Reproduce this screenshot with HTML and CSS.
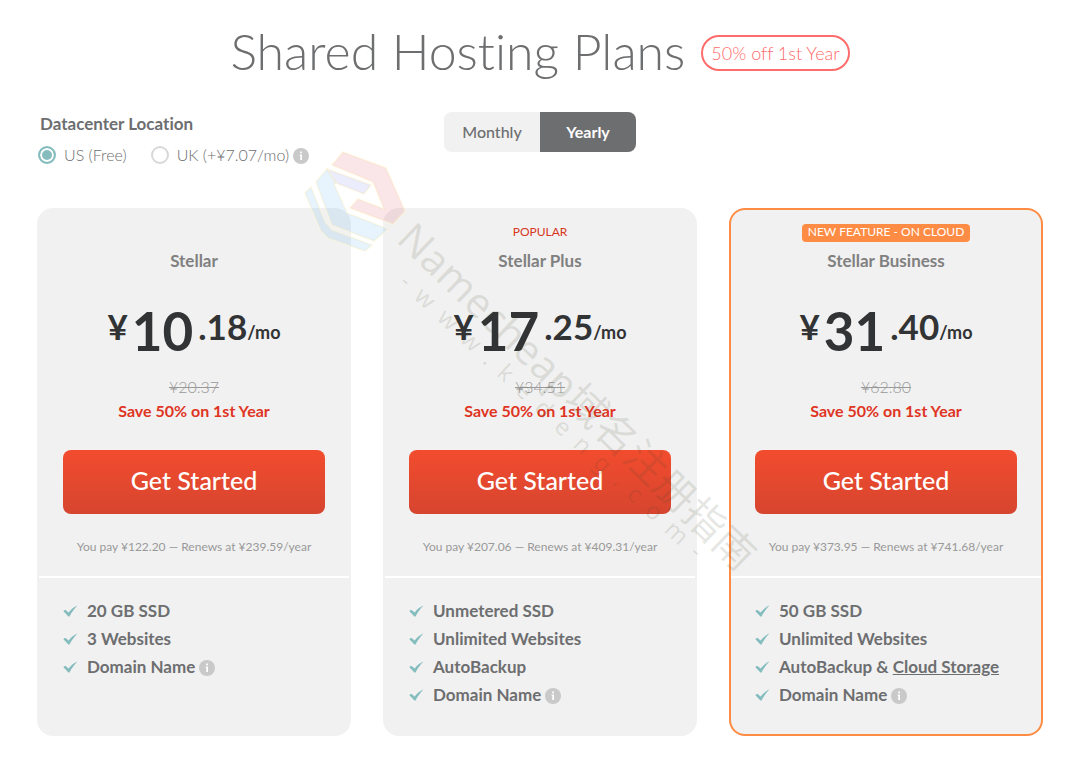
FILE: index.html
```html
<!DOCTYPE html>
<html lang="en">
<head>
<meta charset="utf-8">
<title>Shared Hosting Plans</title>
<link rel="stylesheet" href="styles.css">
</head>
<body>
<svg class="symbols" aria-hidden="true">
  <symbol id="tick" viewBox="0 0 15 12"><path d="M.4 6.200C1 5 2 4.700 3.200 5.400L5.600 7.500C8 4.500 11 1.900 14.600.300 11.500 3.600 8.800 7.200 6.500 11.500H5.400z" fill="#85bdbf"/></symbol>
  <symbol id="info" viewBox="0 0 16 16"><circle cx="8" cy="8" r="8" fill="#c9c9c9"/><path d="M6.500 6.500H9V12H7.300V7.500H6.500zM7.200 3.600H9V5.200H7.200z" fill="#fff"/></symbol>
</svg>
<main class="page">
  <header class="title-row">
    <h1 class="title">Shared Hosting Plans</h1>
    <span class="offer">50% off 1st Year</span>
  </header>

  <div class="options">
    <fieldset class="location">
      <legend class="location-title">Datacenter Location</legend>
      <div class="choices">
        <label class="choice"><input class="radio" type="radio" name="dc" checked>US (Free)</label>
        <label class="choice"><input class="radio" type="radio" name="dc">UK (+¥7.07/mo)</label>
        <svg class="info"><use href="#info"/></svg>
      </div>
    </fieldset>
    <div class="toggle">
      <button class="toggle-button" type="button">Monthly</button>
      <button class="toggle-button toggle-active" type="button">Yearly</button>
    </div>
  </div>

  <div class="plans">
    <section class="plan">
      <div class="summary">
        <div class="flag"></div>
        <h2 class="name">Stellar</h2>
        <div class="price"><span class="part">¥</span><span class="whole">10</span><span class="part">.18</span><span class="unit">/mo</span></div>
        <s class="old">¥20.37</s>
        <p class="save">Save 50% on 1st Year</p>
        <button class="start" type="button">Get Started</button>
        <p class="terms">You pay ¥122.20 — Renews at ¥239.59/year</p>
      </div>
      <ul class="features">
        <li class="feature"><svg class="tick"><use href="#tick"/></svg><span>20 GB SSD</span></li>
        <li class="feature"><svg class="tick"><use href="#tick"/></svg><span>3 Websites</span></li>
        <li class="feature"><svg class="tick"><use href="#tick"/></svg><span>Domain Name</span><svg class="info"><use href="#info"/></svg></li>
      </ul>
    </section>

    <section class="plan">
      <div class="summary">
        <div class="flag"><span class="popular">POPULAR</span></div>
        <h2 class="name">Stellar Plus</h2>
        <div class="price"><span class="part">¥</span><span class="whole">17</span><span class="part">.25</span><span class="unit">/mo</span></div>
        <s class="old">¥34.51</s>
        <p class="save">Save 50% on 1st Year</p>
        <button class="start" type="button">Get Started</button>
        <p class="terms">You pay ¥207.06 — Renews at ¥409.31/year</p>
      </div>
      <ul class="features">
        <li class="feature"><svg class="tick"><use href="#tick"/></svg><span>Unmetered SSD</span></li>
        <li class="feature"><svg class="tick"><use href="#tick"/></svg><span>Unlimited Websites</span></li>
        <li class="feature"><svg class="tick"><use href="#tick"/></svg><span>AutoBackup</span></li>
        <li class="feature"><svg class="tick"><use href="#tick"/></svg><span>Domain Name</span><svg class="info"><use href="#info"/></svg></li>
      </ul>
    </section>

    <section class="plan plan-cloud">
      <div class="summary">
        <div class="flag"><span class="badge">NEW FEATURE - ON CLOUD</span></div>
        <h2 class="name">Stellar Business</h2>
        <div class="price"><span class="part">¥</span><span class="whole">31</span><span class="part">.40</span><span class="unit">/mo</span></div>
        <s class="old">¥62.80</s>
        <p class="save">Save 50% on 1st Year</p>
        <button class="start" type="button">Get Started</button>
        <p class="terms">You pay ¥373.95 — Renews at ¥741.68/year</p>
      </div>
      <ul class="features">
        <li class="feature"><svg class="tick"><use href="#tick"/></svg><span>50 GB SSD</span></li>
        <li class="feature"><svg class="tick"><use href="#tick"/></svg><span>Unlimited Websites</span></li>
        <li class="feature"><svg class="tick"><use href="#tick"/></svg><span>AutoBackup &amp; <a class="link" href="#">Cloud Storage</a></span></li>
        <li class="feature"><svg class="tick"><use href="#tick"/></svg><span>Domain Name</span><svg class="info"><use href="#info"/></svg></li>
      </ul>
    </section>
  </div>

  <svg class="watermark" viewBox="0 0 520 480" aria-hidden="true">
    <g stroke="#fff8d8" stroke-width="2" stroke-opacity=".5" paint-order="stroke">
      <path fill="#d8324a" fill-opacity=".12" d="M43 12 86 28 105 71 93 84 50 68 58 59 84 69 73 42 32 25z"/>
      <path fill="#4a50e8" fill-opacity=".11" d="M27 29 71 45 64 54 36 43z"/>
      <path fill="#38a0f0" fill-opacity=".12" d="M27 29 36 43 34 44 47 73 88 89 74 101 32 85 16 42z"/>
      <path fill="#38a0f0" fill-opacity=".12" d="M11 47 5 53 21 91 28 98 65 111 72 105 32 90 25 82z"/>
    </g>
    <g class="mark-text">
      <text class="mark-name" transform="translate(95 101) rotate(44)">Namecheap域名注册指南</text>
      <text class="mark-site" transform="translate(98 144) rotate(43)">-  w  w  w  .  k  e  d  e  n  g  .  c  o  m  -</text>
    </g>
  </svg>
</main>
</body>
</html>
```
FILE: styles.css
```css
* { box-sizing: border-box; }

body {
  margin: 0;
  background: #fff;
  color: #6d6e70;
  font-family: Lato, "Noto Sans CJK SC", sans-serif;
  font-size: 16px;
  font-variant-ligatures: none;
  line-height: 24px;
}

h1, h2, p, ul, fieldset { margin: 0; padding: 0; }
button { font-family: inherit; cursor: pointer; }

.symbols { display: none; }

.page {
  position: relative;
  padding: 14px 29px 24px 37px;
}

.title-row {
  display: flex;
  justify-content: center;
  align-items: center;
  gap: 16px;
}
.title {
  font-size: 50px;
  font-weight: 300;
  line-height: 74px;
}
.offer {
  margin-top: 4px;
  padding: 0 8px;
  border: 2px solid #ff6c6c;
  border-radius: 18px;
  color: #ff6c6c;
  font-size: 18px;
  font-weight: 300;
  line-height: 32px;
}

.options {
  display: grid;
  grid-template-columns: 1fr auto 1fr;
  align-items: start;
  margin-top: 24px;
}
.location { border: 0; }
.location-title {
  padding: 0 3px;
  font-size: 17px;
  font-weight: 700;
}
.choices {
  display: flex;
  align-items: center;
  margin-top: 7px;
  padding-left: 1px;
}
.choice {
  display: flex;
  align-items: center;
  gap: 8px;
  font-weight: 300;
}
.choice + .choice { margin-left: 24px; }
.radio {
  appearance: none;
  width: 18px;
  height: 18px;
  margin: 0;
  border: 2px solid #d8d8d8;
  border-radius: 50%;
  background: #fff;
}
.radio:checked {
  border-color: #85bdbf;
  background: #85bdbf;
  box-shadow: inset 0 0 0 2px #fff;
}
.info {
  width: 16px;
  height: 16px;
  margin: 2px 0 0 4px;
}

.toggle {
  display: flex;
  border-radius: 8px;
  overflow: hidden;
}
.toggle-button {
  width: 96px;
  height: 40px;
  padding: 0 0 2px;
  border: 0;
  background: #f1f1f1;
  color: #6d6e70;
  font-size: 16px;
  font-weight: 500;
}
.toggle-active {
  background: #6d6e70;
  color: #fff;
  font-weight: 700;
}

.plans {
  display: grid;
  grid-template-columns: repeat(3, 1fr);
  gap: 32px;
  margin-top: 41px;
}
.plan {
  border: 2px solid #f1f1f1;
  border-radius: 16px;
  background: #f1f1f1;
}
.plan-cloud { border-color: #ff8c44; }

.summary {
  display: flex;
  flex-direction: column;
  align-items: center;
  padding: 14px 24px 17px;
  border-bottom: 2px solid #fff;
}
.flag {
  height: 18px;
  font-size: 12px;
  line-height: 16px;
}
.popular { color: #d8371f; }
.badge {
  display: block;
  padding: 0 6px 2px;
  border-radius: 4px;
  background: #ff8c44;
  color: #fff;
}
.name {
  margin-top: 7px;
  color: #808080;
  font-size: 17px;
  font-weight: 700;
  line-height: 24px;
}
.price {
  display: flex;
  align-items: flex-start;
  margin-top: 26px;
  color: #313334;
  font-weight: 700;
}
.part { font-size: 35px; line-height: 54px; }
.whole { margin: 0 5px 0 4px; font-size: 53px; line-height: 64px; }
.unit { font-size: 18px; line-height: 66px; }
.old {
  margin-top: 10px;
  color: #999;
  font-weight: 300;
}
.save {
  color: #e03423;
  font-weight: 700;
}
.start {
  width: 100%;
  height: 64px;
  margin-top: 27px;
  padding: 0 0 4px;
  border: 0;
  border-radius: 8px;
  background: linear-gradient(#f24c2e, #d6452f);
  color: #fff;
  font-size: 25px;
  font-weight: 500;
}
.terms {
  margin-top: 21px;
  color: #999;
  font-size: 12px;
  white-space: nowrap;
}

.features {
  padding: 19px 24px 25px;
  font-size: 17px;
  font-weight: 700;
  line-height: 28px;
  list-style: none;
}
.feature {
  display: flex;
  align-items: center;
}
.tick {
  width: 15px;
  height: 12px;
  margin-right: 9px;
}
.link { color: inherit; }

.watermark {
  position: absolute;
  top: 140px;
  left: 300px;
  width: 520px;
  height: 480px;
  pointer-events: none;
}
.mark-text {
  fill: #3c4628;
  fill-opacity: .12;
  font-family: "Noto Sans", "Noto Sans CJK SC", sans-serif;
}
.mark-name { font-size: 41px; }
.mark-site { font-size: 24px; white-space: pre; }
```
